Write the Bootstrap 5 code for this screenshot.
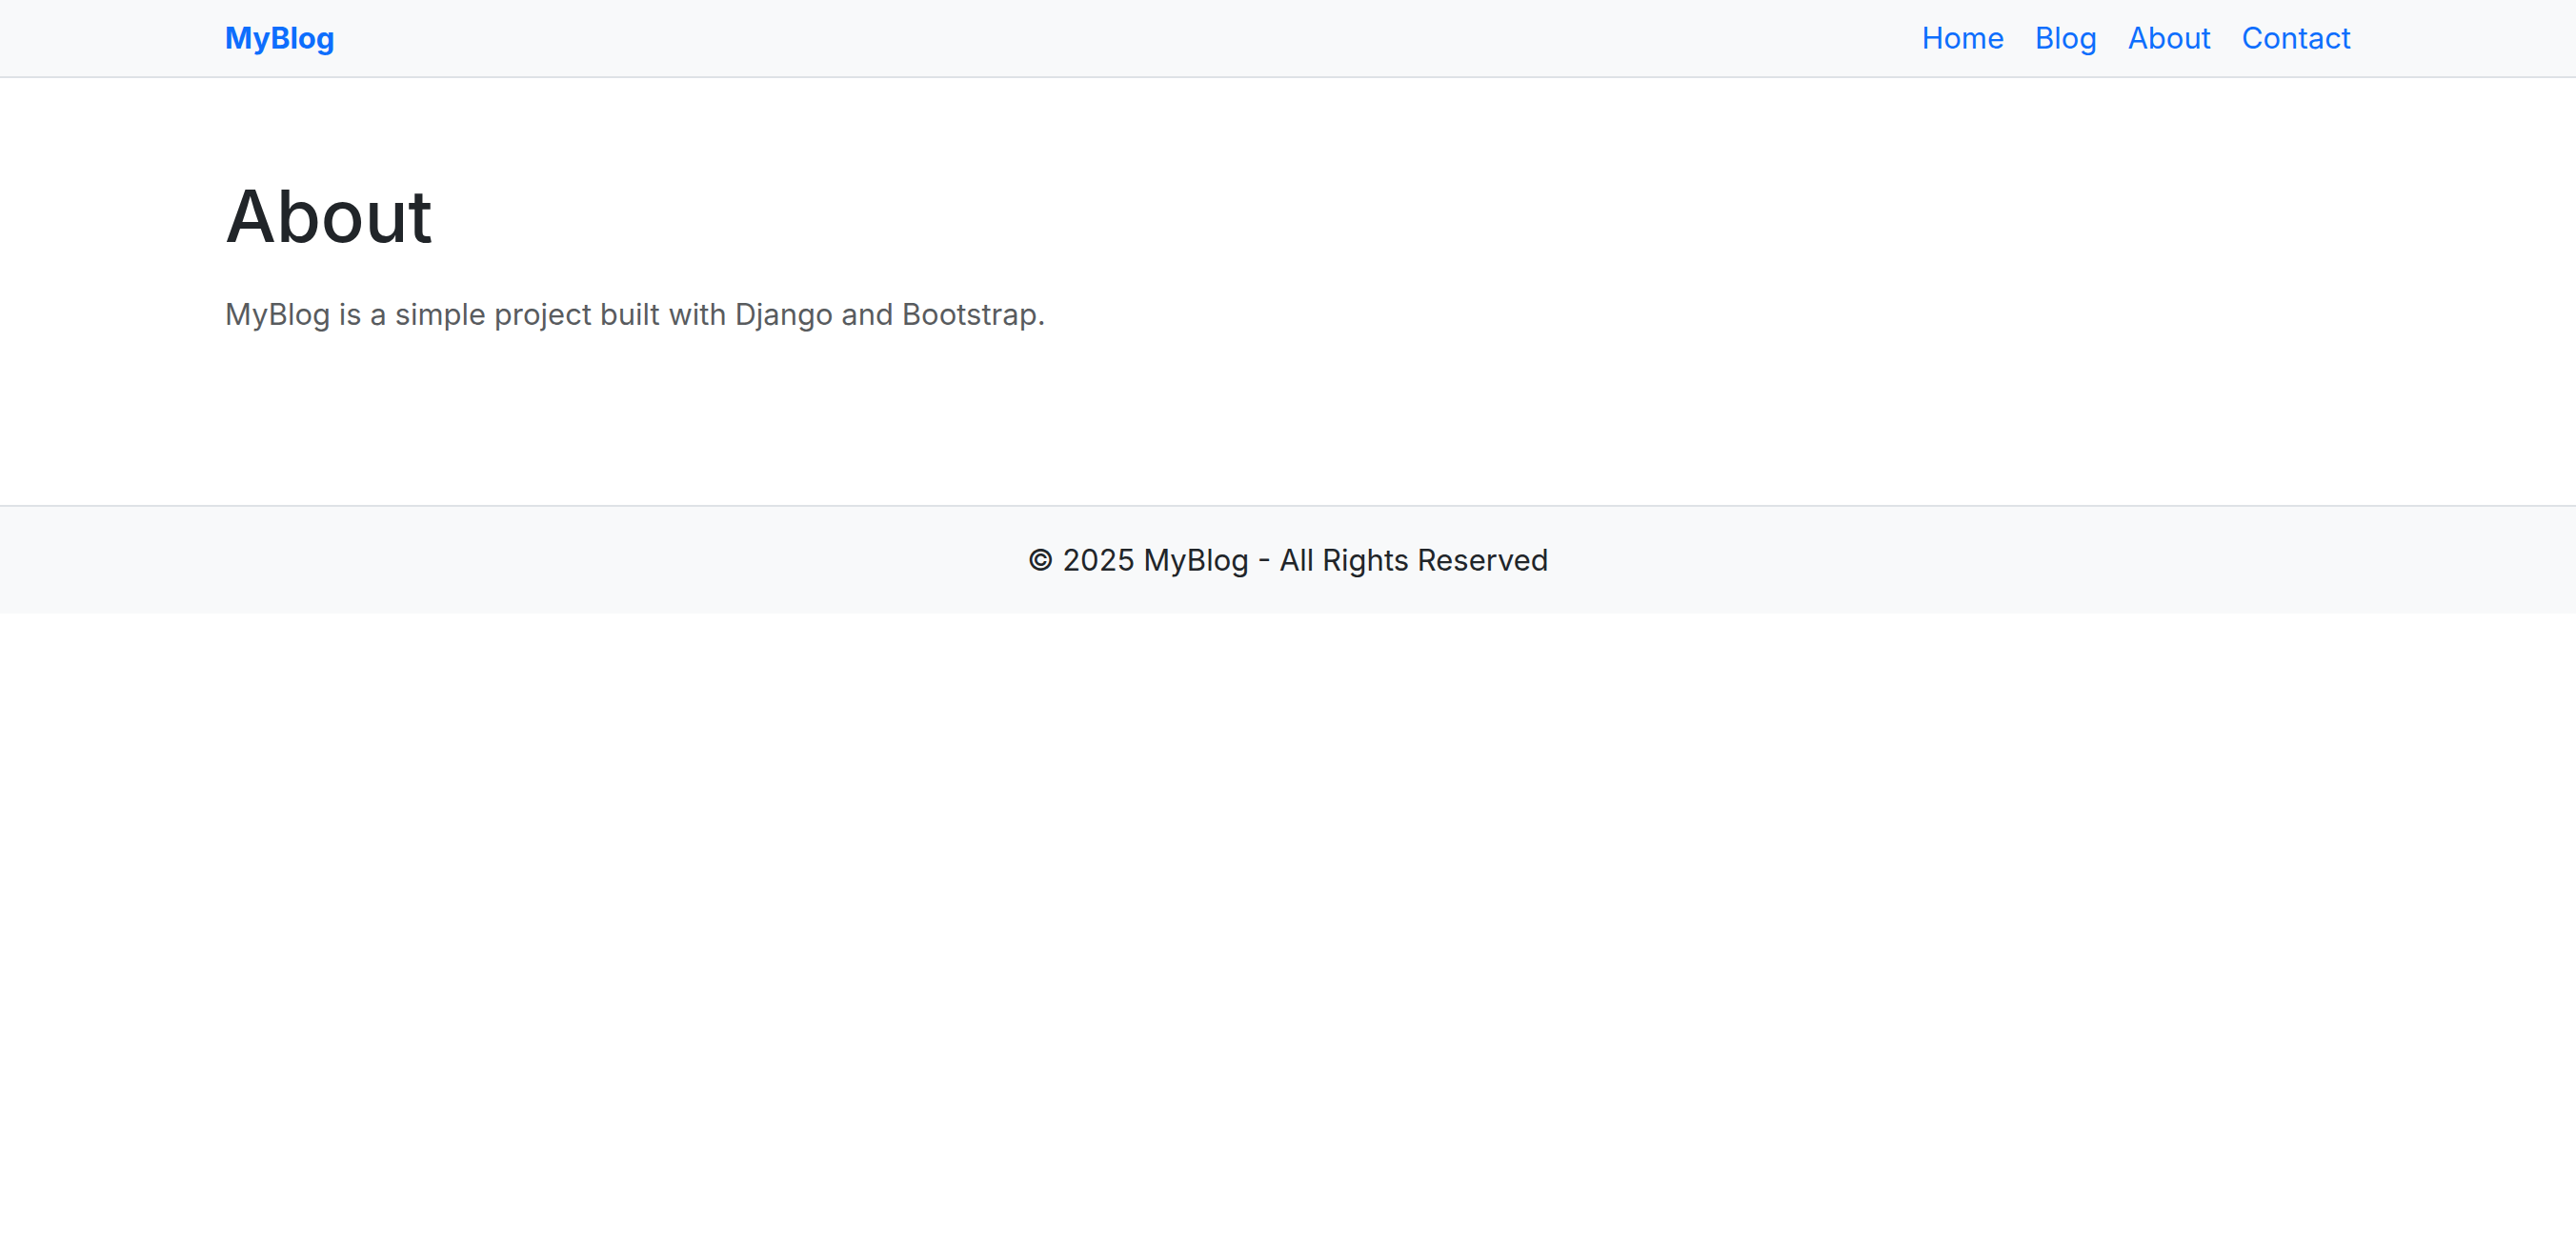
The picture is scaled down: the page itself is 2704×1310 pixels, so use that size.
<!DOCTYPE html>
<html lang="en">
<head>
<meta charset="utf-8">
<meta name="viewport" content="width=device-width, initial-scale=1">
<title>About - MyBlog</title>
<link href="https://cdn.jsdelivr.net/npm/bootstrap@5.3.0/dist/css/bootstrap.min.css" rel="stylesheet">
<style>
:root { font-size: 32px; }
body { font-family: Inter, "Liberation Sans", sans-serif; font-size: 31px; line-height: 48px; }
.site-header, .site-footer { border: 0 solid #dee2e6; }
.site-header { border-bottom-width: 2px; }
.site-footer { border-top-width: 2px; }
.site-wrap { max-width: 2280px; }
.page-title { font-size: 76px; line-height: 96px; }
.page-text { color: rgba(33, 37, 41, .75); }
</style>
</head>
<body>
<header class="site-header bg-light py-2">
  <div class="container-fluid site-wrap d-flex justify-content-between">
    <a class="fw-bold text-decoration-none" href="#">MyBlog</a>
    <nav class="d-flex gap-3" aria-label="Main">
      <a class="text-decoration-none" href="#">Home</a>
      <a class="text-decoration-none" href="#">Blog</a>
      <a class="text-decoration-none" href="#">About</a>
      <a class="text-decoration-none" href="#">Contact</a>
    </nav>
  </div>
</header>
<main class="container-fluid site-wrap py-5">
  <h1 class="page-title mb-3">About</h1>
  <p class="page-text mb-3">MyBlog is a simple project built with Django and Bootstrap.</p>
</main>
<footer class="site-footer bg-light text-center mt-4 py-3">© 2025 MyBlog - All Rights Reserved</footer>
<script src="https://cdn.jsdelivr.net/npm/bootstrap@5.3.0/dist/js/bootstrap.bundle.min.js"></script>
</body>
</html>
